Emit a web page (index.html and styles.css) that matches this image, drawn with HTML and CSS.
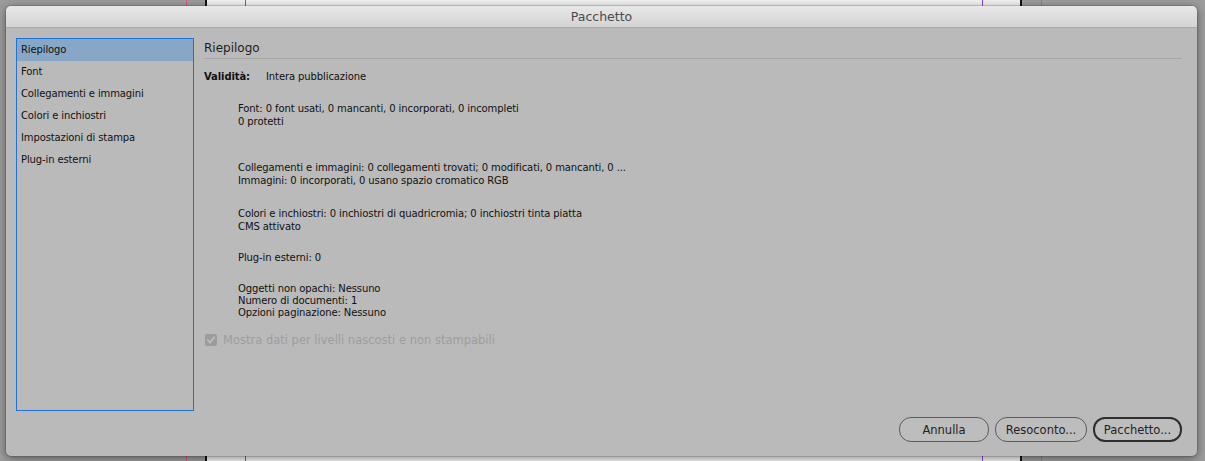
FILE: index.html
```html
<!DOCTYPE html>
<html lang="it">
<head>
<meta charset="utf-8">
<title>Pacchetto</title>
<link rel="stylesheet" href="styles.css">
</head>
<body>
<div class="desktop">
  <div class="page"></div>
  <div class="vline red l1"></div>
  <div class="vline black l2"></div>
  <div class="vline purple l3"></div>
  <div class="vline purple l4"></div>
  <div class="vline black l5"></div>
  <div class="vline red l6"></div>

  <div class="dialog">
    <div class="titlebar">Pacchetto</div>
    <div class="dbody">
      <div class="main">
        <ul class="sidebar">
          <li class="item selected">Riepilogo</li>
          <li class="item">Font</li>
          <li class="item">Collegamenti e immagini</li>
          <li class="item">Colori e inchiostri</li>
          <li class="item">Impostazioni di stampa</li>
          <li class="item">Plug-in esterni</li>
        </ul>
        <div class="content">
          <div class="heading">Riepilogo</div>
          <div class="validity"><span class="vlabel">Validità:</span><span>Intera pubblicazione</span></div>
          <div class="summary">
            <div class="block b-font">Font: 0 font usati, 0 mancanti, 0 incorporati, 0 incompleti<br>0 protetti</div>
            <div class="block b-links">Collegamenti e immagini: 0 collegamenti trovati; 0 modificati, 0 mancanti, 0 ...<br>Immagini: 0 incorporati, 0 usano spazio cromatico RGB</div>
            <div class="block b-colors">Colori e inchiostri: 0 inchiostri di quadricromia; 0 inchiostri tinta piatta<br>CMS attivato</div>
            <div class="block b-plugins">Plug-in esterni: 0</div>
            <div class="block b-other">Oggetti non opachi: Nessuno<br>Numero di documenti: 1<br>Opzioni paginazione: Nessuno</div>
          </div>
          <label class="check">
            <span class="box"><svg viewBox="0 0 12 12" width="12" height="12"><path d="M2.8 6.2 L5 8.6 L9.3 3.2" fill="none" stroke="#bdbdbd" stroke-width="1.8" stroke-linecap="round" stroke-linejoin="round"/></svg></span>
            <span class="clabel">Mostra dati per livelli nascosti e non stampabili</span>
          </label>
        </div>
      </div>
      <div class="buttons">
        <button class="btn">Annulla</button>
        <button class="btn">Resoconto...</button>
        <button class="btn default">Pacchetto...</button>
      </div>
    </div>
  </div>
</div>
</body>
</html>
```
FILE: styles.css
```css
* { box-sizing: border-box; }
html, body { margin: 0; padding: 0; }
body {
  width: 1205px;
  height: 461px;
  overflow: hidden;
  background: #9c9c9c;
  font-family: "DejaVu Sans", "Liberation Sans", sans-serif;
}
.desktop {
  position: relative;
  width: 1205px;
  height: 461px;
}
.page {
  position: absolute;
  left: 207px;
  top: 0;
  width: 813px;
  height: 461px;
  background: #f2f2f2;
}
.vline { position: absolute; top: 0; height: 461px; width: 1px; }
.red { background: #e0587a; }
.black { background: #111; width: 2px; }
.purple { background: #9a3cf0; }
.l1 { left: 186px; }
.l2 { left: 205px; }
.l3 { left: 245px; }
.l4 { left: 982px; }
.l5 { left: 1020px; }
.l6 { left: 1041px; }

.dialog {
  position: absolute;
  left: 6px;
  top: 6px;
  width: 1191px;
  height: 450px;
  border-radius: 5px;
  background: #bababa;
  box-shadow: 0 2px 10px rgba(0,0,0,0.45), 0 0 0 1px rgba(0,0,0,0.12);
  overflow: hidden;
  display: flex;
  flex-direction: column;
}
.titlebar {
  height: 22px;
  flex: none;
  background: linear-gradient(#e8e8e8, #d3d3d3);
  border-bottom: 1px solid #a9a9a9;
  text-align: center;
  font-size: 12.5px;
  line-height: 22px;
  color: #4a4a4a;
}
.dbody {
  flex: 1;
  padding: 10px 15px 0 10px;
  display: flex;
  flex-direction: column;
}
.main {
  display: flex;
  gap: 10px;
  height: 373px;
}
.sidebar {
  list-style: none;
  margin: 0;
  padding: 0;
  width: 178px;
  height: 373px;
  border: 1px solid #1e72dc;
  background: #bababa;
  font-size: 10px;
  letter-spacing: -0.12px;
  color: #111;
}
.item {
  height: 22px;
  line-height: 21px;
  padding-left: 4px;
}
.selected { background: #88a7c6; }

.content {
  flex: 1;
  display: flex;
  flex-direction: column;
}
.heading {
  font-size: 12px;
  color: #1d1d1d;
  height: 21px;
  line-height: 20px;
  border-bottom: 1px solid #a6a6a6;
}
.validity {
  margin-top: 11px;
  font-size: 10px;
  letter-spacing: -0.1px;
  color: #111;
  display: flex;
  line-height: 13px;
}
.vlabel { font-weight: bold; width: 62px; }
.summary {
  padding-left: 34px;
  font-size: 10px;
  letter-spacing: -0.1px;
  line-height: 13px;
  color: #111;
}
.b-font { margin-top: 19px; }
.b-links { margin-top: 33px; }
.b-colors { margin-top: 20px; }
.b-plugins { margin-top: 18px; }
.b-other { margin-top: 19px; line-height: 12px; }

.check {
  display: flex;
  align-items: center;
  gap: 6px;
  margin-top: 14px;
  padding-left: 1px;
}
.box {
  width: 12px;
  height: 12px;
  border-radius: 2px;
  background: #9c9c9c;
  display: flex;
}
.clabel {
  font-size: 11.5px;
  color: #9d9d9d;
}

.buttons {
  display: flex;
  justify-content: flex-end;
  gap: 6px;
  margin-top: 6px;
}
.btn {
  height: 25px;
  border-radius: 12px;
  border: 1px solid #5a5a5a;
  background: #bdbdbd;
  font-family: "DejaVu Sans", "Liberation Sans", sans-serif;
  font-size: 11.5px;
  color: #222;
  padding: 0;
}
.btn:nth-child(1) { width: 90px; }
.btn:nth-child(2) { width: 92px; }
.btn.default { width: 89px; border: 2px solid #2e2e2e; }
```
